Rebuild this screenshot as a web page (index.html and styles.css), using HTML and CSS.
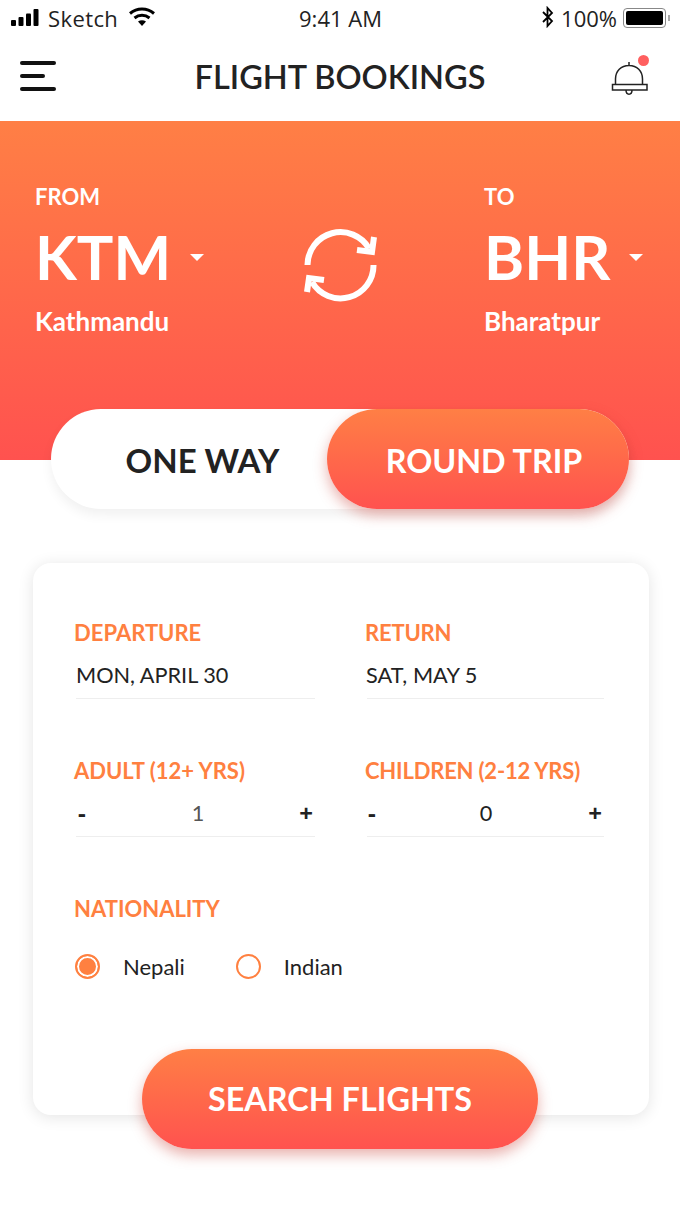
FILE: index.html

```html
<!DOCTYPE html>
<html lang="en">
<head>
    <meta charset="UTF-8">
    <title>Flight Bookings</title>
    <link rel="stylesheet" href="styles.css">
</head>
<body>
    <div class="status-bar">
        <div class="status-left">
            <svg class="signal" width="32" height="18" viewBox="0 0 32 18"><rect x="0" y="11" width="5" height="6" rx="1"/><rect x="7.500" y="8" width="5" height="9" rx="1"/><rect x="15" y="4.500" width="5" height="12.500" rx="1"/><rect x="22.500" y="0" width="5" height="17" rx="1"/></svg>
            <span>Sketch</span>
            <svg class="wifi" width="28" height="20" viewBox="0 0 28 20"><path d="M2 6.500C9 .5 19 .5 26 6.500" fill="none" stroke="#000" stroke-width="3"/><path d="M6.500 11C11 7.300 17 7.300 21.500 11" fill="none" stroke="#000" stroke-width="3"/><path d="M10 14.500C12.500 12.800 15.500 12.800 18 14.500L14 19Z"/></svg>
        </div>
        <div class="status-time">9:41 AM</div>
        <div class="status-right">
            <svg class="bluetooth" width="14" height="22" viewBox="0 0 14 22"><path d="M2 6L11 15L6.500 20V2L11 7L2 16" fill="none" stroke="#000" stroke-width="1.800"/></svg>
            <span>100%</span>
            <div class="battery"><div class="battery-fill"></div></div>
            <div class="battery-cap"></div>
        </div>
    </div>

    <header class="nav">
        <div class="menu-icon"><span class="bar"></span><span class="bar bar-short"></span><span class="bar"></span></div>
        <h1 class="nav-title">FLIGHT BOOKINGS</h1>
        <div class="bell">
            <svg width="38" height="36" viewBox="0 0 38 36"><path d="M4.500 24.500V19C4.500 11 10 5.500 18 5.500C26 5.500 31.500 11 31.500 19V24.500M18 5.500V2M1.500 24.500H36V30H1.500ZM15 30C15 35.500 21 35.500 21 30" fill="none" stroke="#222" stroke-width="1.500"/></svg>
            <span class="bell-dot"></span>
        </div>
    </header>

    <section class="hero">
        <div class="place">
            <div class="place-label">FROM</div>
            <div class="place-code">KTM<span class="caret"></span></div>
            <div class="place-name">Kathmandu</div>
        </div>
        <svg class="swap" width="76" height="76" viewBox="0 0 76 76">
            <g fill="none" stroke="#fff" stroke-width="6">
                <path d="M4.500 38A33 33 0 0 1 66 21.500"/>
                <path d="M70.500 38A33 33 0 0 1 9 55"/>
                <path d="M71 10L69 25L54 23"/>
                <path d="M21 53L6 51L4 65"/>
            </g>
        </svg>
        <div class="place">
            <div class="place-label">TO</div>
            <div class="place-code">BHR<span class="caret"></span></div>
            <div class="place-name">Bharatpur</div>
        </div>
    </section>

    <div class="toggle">
        <div class="toggle-option">ONE WAY</div>
        <div class="toggle-option toggle-active">ROUND TRIP</div>
    </div>

    <main class="card">
        <div class="field-grid">
            <div class="field">
                <div class="field-label">DEPARTURE</div>
                <div class="field-value">MON, APRIL 30</div>
            </div>
            <div class="field field-right">
                <div class="field-label">RETURN</div>
                <div class="field-value">SAT, MAY 5</div>
            </div>
            <div class="field">
                <div class="field-label">ADULT (12+ YRS)</div>
                <div class="field-value stepper"><b>-</b><span class="count count-light">1</span><b>+</b></div>
            </div>
            <div class="field field-right">
                <div class="field-label">CHILDREN (2-12 YRS)</div>
                <div class="field-value stepper"><b>-</b><span class="count">0</span><b>+</b></div>
            </div>
        </div>
        <div class="field-label nationality-label">NATIONALITY</div>
        <div class="radios">
            <div class="radio-item"><span class="radio radio-on"></span>Nepali</div>
            <div class="radio-item"><span class="radio"></span>Indian</div>
        </div>
        <button class="search-btn" type="button">SEARCH FLIGHTS</button>
    </main>
</body>
</html>
```

FILE: styles.css

```css
* { box-sizing: border-box; }
body { margin: 0; width: 680px; height: 1209px; overflow: hidden; background: #fff; font-family: Lato, sans-serif; color: #222; }

.status-bar { display: grid; grid-template-columns: 1fr auto 1fr; align-items: center; height: 40px; padding: 0 10px 4px 11px; font-family: "Open Sans", sans-serif; font-size: 22px; color: #222; }
.status-left, .status-right { display: flex; align-items: center; }
.status-right { justify-content: flex-end; }
.status-left span { margin-left: 5px; letter-spacing: 0.4px; }
.wifi { margin-left: 10px; margin-top: -3px; }
.bluetooth { margin-right: 6px; margin-top: -3px; margin-left: -2px; }
.battery { width: 43px; height: 20px; margin-left: 6px; padding: 2px; border: 1.500px solid #888; border-radius: 4px; }
.battery-fill { height: 100%; background: #000; border-radius: 2px; }
.battery-cap { width: 2px; height: 6px; margin-left: 2px; background: #aaa; }

.nav { position: relative; display: flex; align-items: center; justify-content: center; height: 81px; padding-bottom: 8px; }
.nav-title { margin: 0; font-size: 32.500px; font-weight: 600; color: #222; }
.menu-icon { position: absolute; left: 20px; top: 21px; display: flex; flex-direction: column; gap: 9px; width: 36px; }
.bar { display: block; height: 4px; background: #111; border-radius: 2px; }
.bar-short { width: 25px; }
.bell { position: absolute; left: 611px; top: 20px; width: 38px; height: 36px; }
.bell-dot { position: absolute; left: 27px; top: -5px; width: 11px; height: 11px; border-radius: 50%; background: #ff5f5f; }

.hero { display: flex; justify-content: space-between; height: 339px; padding: 62px 35px 0 35px; background: linear-gradient(180deg, #ff7f45, #ff524f); color: #fff; }
.place { width: 160px; }
.place:last-child { margin-right: 1px; margin-left: -1px; }
.place-label { font-size: 22px; font-weight: 700; line-height: 28px; }
.place-code { display: flex; align-items: center; margin-top: 8px; font-size: 61px; font-weight: 700; line-height: 76px; }
.caret { width: 0; height: 0; margin-left: 19px; border: 7px solid transparent; border-top: 7px solid #fff; border-bottom: 0; }
.place-name { margin-top: 11px; font-size: 26px; font-weight: 700; line-height: 30px; }
.swap { margin: 44px 0 0 2px; }

.toggle { position: relative; display: flex; width: 578px; height: 100px; margin: -51px 0 0 51px; background: #fff; border-radius: 50px; box-shadow: 0 6px 12px rgba(0,0,0,0.06); }
.toggle-option { display: flex; align-items: center; justify-content: center; padding-top: 2px; font-size: 33px; font-weight: 700; }
.toggle-option:first-child { width: 276px; padding-left: 27px; }
.toggle-active { width: 302px; padding-left: 12px; font-size: 32.300px; color: #fff; background: linear-gradient(180deg, #ff7f45, #ff524f); border-radius: 50px; box-shadow: 0 6px 14px rgba(200,60,50,0.4); }

.card { position: relative; width: 616px; height: 552px; margin: 54px 0 0 33px; padding: 56px 42px 0 41px; background: #fff; border-radius: 18px; box-shadow: 0 2px 16px rgba(0,0,0,0.11); }
.field-grid { display: grid; grid-template-columns: 241px 239px; column-gap: 50px; row-gap: 58px; }
.field-label { font-size: 22px; font-weight: 700; line-height: 28px; color: #ff8040; }
.field-right .field-label { letter-spacing: -0.2px; }
.field-right .field-value { text-indent: -1px; letter-spacing: 0.1px; }
.field-value { display: flex; height: 52px; margin: 0 0 0 2px; padding-top: 14px; font-size: 21.700px; line-height: 28px; color: #222; border-bottom: 1px solid #eee; }
.stepper { justify-content: space-between; padding-left: 2px; padding-right: 2px; }
.stepper b { font-family: "Open Sans", sans-serif; font-size: 24px; }
.count { margin-left: 8px; }
.count-light { margin-left: 11px; color: #555; }
.nationality-label { margin-top: 58px; }
.radios { display: flex; gap: 51px; margin: 30px 0 0 1px; font-size: 22px; }
.radio-item { display: flex; align-items: center; gap: 23px; }
.radio { width: 25px; height: 25px; border: 2px solid #ff8040; border-radius: 50%; }
.radio-on { background: #ff8040; box-shadow: inset 0 0 0 2px #fff; }
.search-btn { position: absolute; left: 109px; top: 486px; width: 396px; height: 100px; padding-bottom: 2px; border: none; border-radius: 50px; color: #fff; font-family: Lato, sans-serif; font-size: 32.400px; font-weight: 700; background: linear-gradient(180deg, #ff7f45, #ff524f); box-shadow: 0 6px 14px rgba(200,60,50,0.4); }
```
